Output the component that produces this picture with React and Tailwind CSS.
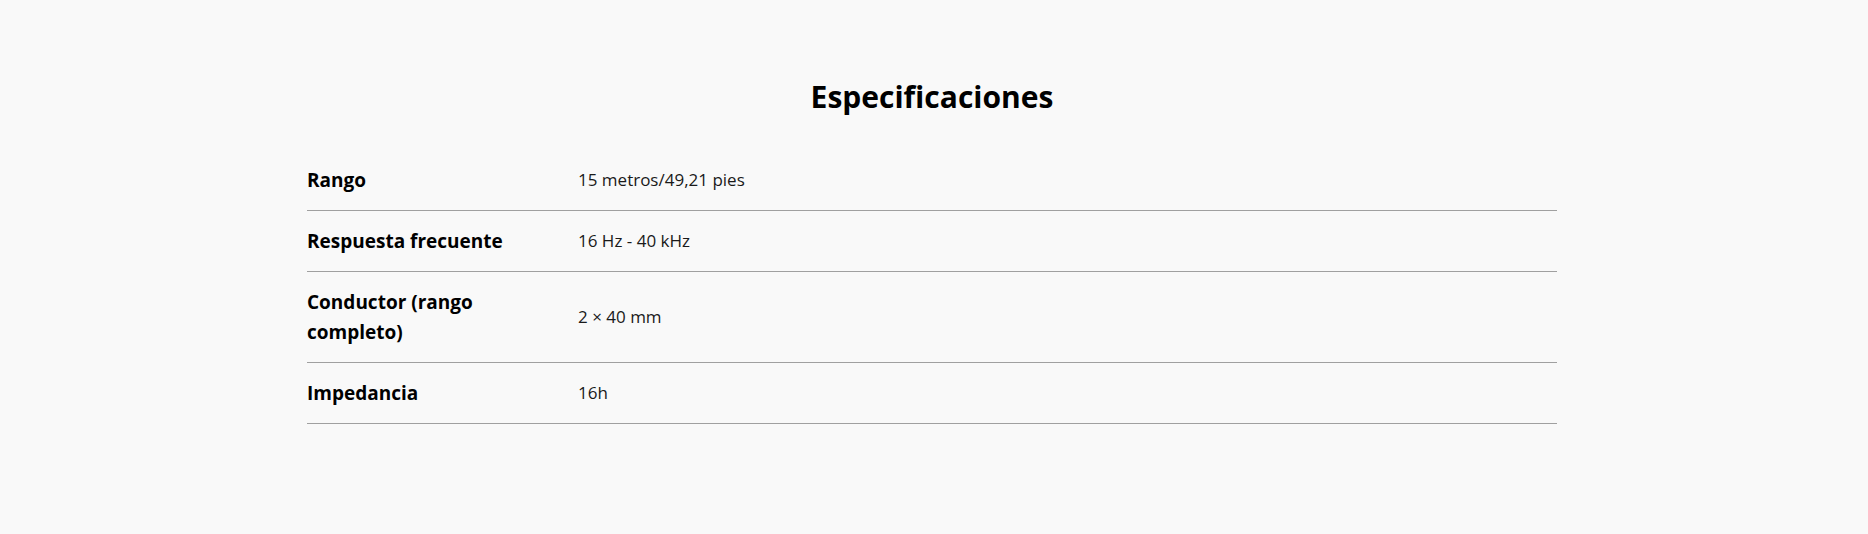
import React from 'react';

const specs = [
    { label: 'Rango', value: '15 metros/49,21 pies' },
    { label: 'Respuesta frecuente', value: '16 Hz - 40 kHz' },
    { label: 'Conductor (rango completo)', value: '2 × 40 mm' },
    { label: 'Impedancia', value: '16h' },
];

const App = () => {
    return (
        <div className="min-h-[534px] w-full bg-[#f9f9f9] text-black font-['Open_Sans',sans-serif] pt-[79px] pr-[4px]">
            <h2 className="text-center text-[30px] leading-[36px] font-bold">Especificaciones</h2>

            <div className="mx-auto mt-[35px] w-[1250px]">
                {specs.map((spec) => (
                    <div key={spec.label} className="flex items-center border-b border-[#a0a0a0] py-[15px]">
                        <div className="w-[271px] shrink-0 pr-[40px] text-[19px] leading-[30px] font-bold">
                            {spec.label}
                        </div>
                        <div className="text-[17px] leading-[30px] text-[#1a1a1a]">{spec.value}</div>
                    </div>
                ))}
            </div>
        </div>
    );
};

export default App;
